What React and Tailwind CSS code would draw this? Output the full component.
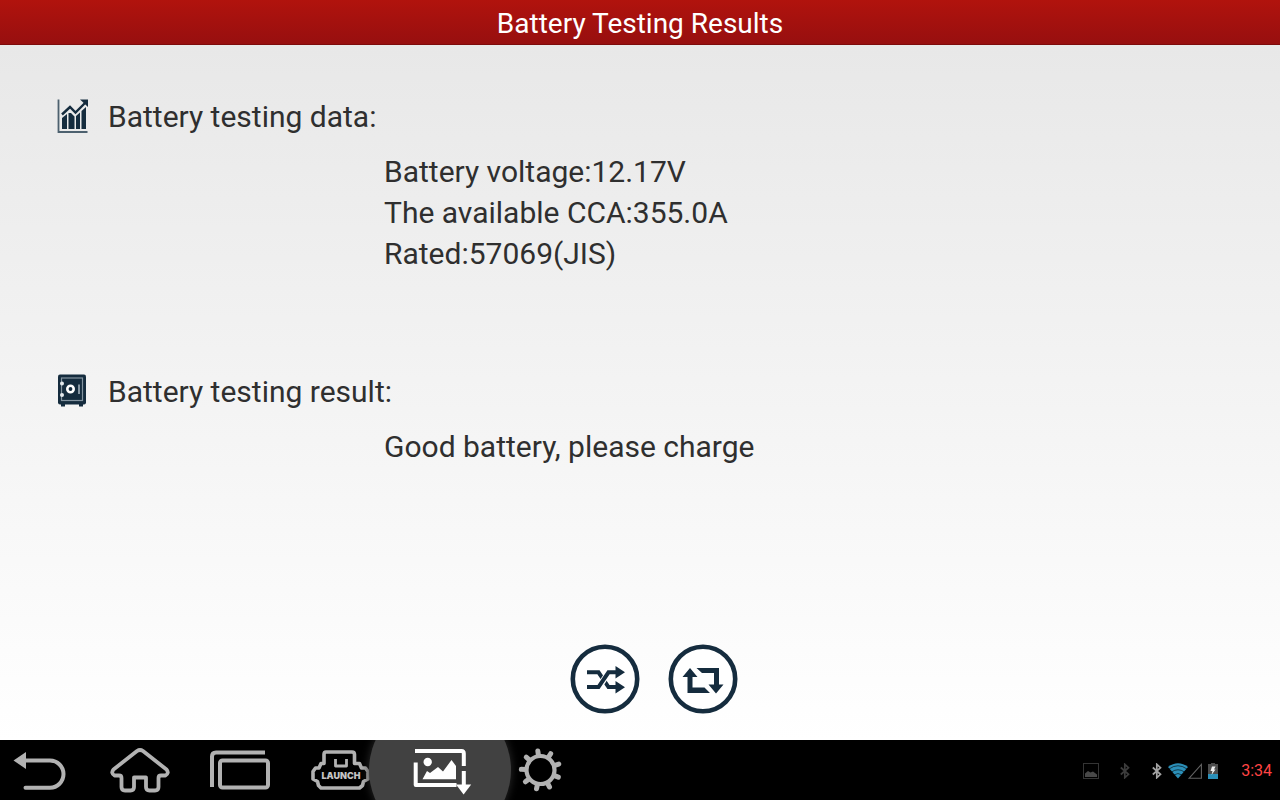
import React from "react";

const NAVY = "#152c3e";
const GRAY = "#b2b2b2";

function ChartIcon() {
  return (
    <svg className="h-9 w-9 shrink-0" viewBox="0.5 1.5 36 36" fill="none" stroke={NAVY} aria-hidden="true">
      <path d="M3 2V34.500H32" strokeWidth="1.800" stroke="#4d616f" />
      <path d="M6.500 17L14.500 9.500L20 15L29.500 5.500" strokeWidth="2.400" />
      <path d="M24.500 2H32.500V9.500Z" fill={NAVY} stroke="none" />
      <path d="M6.500 20.500L11.500 16.500V31.500H6.500ZM13 15.500H15.500L19 19V31.500H13ZM20.500 18.500L24.500 15V31.500H20.500ZM26 13.500L30.500 9.500V31.500H26Z" fill={NAVY} stroke="none" />
    </svg>
  );
}

function SafeIcon() {
  return (
    <svg className="h-9 w-9 shrink-0" viewBox="1 2 36 36" fill="none" aria-hidden="true">
      <path d="M6 30H10V34.500H6ZM24 30H28V34.500H24Z" fill={NAVY} />
      <rect x="3" y="2.500" width="28" height="30" rx="2" fill={NAVY} />
      <rect x="6.500" y="6" width="21" height="22.500" stroke="#8494a0" strokeWidth="1.200" />
      <circle cx="15.500" cy="17" r="3.200" stroke="#fff" strokeWidth="2.600" />
      <circle cx="7" cy="11.500" r="2" fill="#e4e9ec" />
      <circle cx="7" cy="23" r="2" fill="#e4e9ec" />
      <path d="M24 12.500V22" stroke="#8494a0" strokeWidth="2" />
    </svg>
  );
}

function ShuffleIcon() {
  return (
    <svg className="size-[70px]" viewBox="0 0 70 70" fill="none" stroke={NAVY} aria-hidden="true">
      <circle cx="35" cy="35" r="32.200" fill="#fff" strokeWidth="4.600" />
      <path d="M17 28.300H28.500L38.500 43H46" strokeWidth="4" />
      <path d="M29 43L38.500 28.300" stroke="#fff" strokeWidth="6" />
      <path d="M17 43H28.500L38.500 28.300H46" strokeWidth="4" />
      <path d="M45.500 22L55 28.300L45.500 34.500ZM45.500 37L55 43.200L45.500 49.500Z" fill={NAVY} stroke="none" />
    </svg>
  );
}

function RepeatIcon() {
  return (
    <svg className="size-[70px]" viewBox="0 0 70 70" fill="none" stroke={NAVY} aria-hidden="true">
      <circle cx="35" cy="35" r="32.200" fill="#fff" strokeWidth="4.600" />
      <path d="M14.500 33L22 24L29.500 33H24.500V43.500H36.500L42 49H19.500V33Z" fill={NAVY} stroke="none" />
      <path d="M28.500 24H51V40.500H55.500L48 49.500L40.500 40.500H46V29H34Z" fill={NAVY} stroke="none" />
    </svg>
  );
}

function BackIcon() {
  return (
    <svg className="h-[60px] w-20" viewBox="0 0 80 60" fill="none" stroke={GRAY} strokeWidth="4" strokeLinecap="round" aria-hidden="true">
      <path d="M25 20.500H50A13.500 13.600 0 0 1 50 47.700H25.500" />
      <path d="M13.500 20.500L26 12V29Z" fill={GRAY} stroke="none" />
    </svg>
  );
}

function HomeIcon() {
  return (
    <svg className="h-[60px] w-20" viewBox="0 0 80 60" fill="none" stroke={GRAY} strokeWidth="3.800" strokeLinejoin="round" aria-hidden="true">
      <path d="M37 11Q40 9 43 11L66.500 29.500Q69.500 33 65.500 35.500H61Q58.500 35.500 58.500 38V47Q58.500 50.500 55 50.500H49.500Q46 50.500 46 47V37.500H34V47Q34 50.500 30.500 50.500H25Q21.500 50.500 21.500 47V38Q21.500 35.500 19 35.500H14.500Q10.500 33 13.500 29.500Z" />
    </svg>
  );
}

function RecentsIcon() {
  return (
    <svg className="h-[60px] w-20" viewBox="0 0 80 60" fill="none" stroke={GRAY} strokeWidth="4" aria-hidden="true">
      <path d="M65 12.500H16Q12 12.500 12 16.500V47" />
      <rect x="20" y="20.500" width="48" height="27" rx="2.500" />
    </svg>
  );
}

function LaunchIcon() {
  return (
    <svg className="h-[60px] w-20" viewBox="0 0 80 60" fill="none" stroke={GRAY} strokeWidth="3.600" strokeLinejoin="round" aria-hidden="true">
      <path d="M26 12H52Q54.500 12 54.500 14.500V23.500H59.500L61.500 28H65.500L68 31.500V39L63.500 41.500L62.500 45.500L59.500 48H21L18.500 45.500L17.500 41.500L13 39V31.500L15.500 28H19L21 23.500H24V14.500Q24 12 26 12Z" />
      <path d="M35.500 19V26H46.500V19" strokeWidth="2.800" />
      <text x="41" y="39" textAnchor="middle" fill="#c4c4c4" stroke="none" className="font-['Inter',sans-serif] text-[9px] font-black">LAUNCH</text>
    </svg>
  );
}

function ScreenshotIcon() {
  return (
    <svg className="relative h-[60px] w-20" viewBox="0 0 80 60" fill="none" stroke="#fff" strokeWidth="4" aria-hidden="true">
      <path d="M15 11H61.500Q63.800 11 63.800 13.500V26" />
      <path d="M15.700 22.500V45H56.500" strokeLinejoin="round" />
      <path d="M63.800 31V46" />
      <path d="M56 44.500H71.200L63.600 54.500Z" fill="#fff" stroke="none" />
      <circle cx="27.700" cy="22" r="4.200" fill="#fff" stroke="none" />
      <path d="M22.500 39.300L27 31L30 33L38 27L43 31.500L51.500 20L56 26V39.300Z" fill="#fff" stroke="none" />
    </svg>
  );
}

const TEETH = [0, 40, 80, 120, 160, 200, 240, 280, 320];

function SettingsIcon() {
  return (
    <svg className="h-[60px] w-20" viewBox="0 0 80 60" fill="none" stroke={GRAY} aria-hidden="true">
      <circle cx="40.500" cy="30" r="14" strokeWidth="4.200" />
      {TEETH.map((a) => (
        <path key={a} d="M40.500 15V10.800" strokeWidth="5" strokeLinecap="round" transform={`rotate(${a - 8} 40.500 30)`} />
      ))}
    </svg>
  );
}

function PictureIcon() {
  return (
    <svg className="size-4" viewBox="0 0 16 16" fill="none" aria-label="Screenshot saved">
      <rect x="0.500" y="0.500" width="15" height="15" stroke="#343434" />
      <path d="M2 14V10.500L5 8L7.500 9.500L10 8.500L14 11.500V14Z" fill="#484848" />
    </svg>
  );
}

function BluetoothIcon({ color, label }) {
  return (
    <svg className="h-4 w-2.5" viewBox="0 0 10 16" fill="none" stroke={color} strokeWidth="1.700" aria-label={label}>
      <path d="M0.800 4.500L8.500 11.300L4.800 14.700V1.300L8.500 4.700L0.800 11.500" />
    </svg>
  );
}

function WifiIcon() {
  return (
    <svg className="h-4 w-5" viewBox="0 0 20 16" fill="none" aria-label="Wi-Fi">
      <path d="M0 4Q10 -3.500 20 4L10 15.500Z" fill="#2b8fb8" />
      <path d="M1 6Q10 -0.500 19 6M3.500 9Q10 4.500 16.500 9M6 12Q10 9 14 12" stroke="#000" strokeWidth="0.600" />
    </svg>
  );
}

function SignalIcon() {
  return (
    <svg className="h-4 w-3.5" viewBox="0 0 14 16" fill="none" aria-label="No signal">
      <path d="M1 15.300L13.400 1.500V15.300Z" stroke="#626262" strokeWidth="1.100" />
    </svg>
  );
}

function BatteryIcon() {
  return (
    <svg className="h-4 w-2.5" viewBox="0 0 10 16" aria-label="Charging">
      <path d="M3 0H7V1H10V16H0V1H3Z" fill="#4c4c4c" />
      <path d="M0 11H10V16H0Z" fill="#2b8fb8" />
      <path d="M4 3.500H7.500L6 6.500H7.500L3.500 12L4.500 8H2.500Z" fill="#eee" />
    </svg>
  );
}

const READINGS = ["Battery voltage:12.17V", "The available CCA:355.0A", "Rated:57069(JIS)"];

const NAV = [
  { label: "Back", Icon: BackIcon },
  { label: "Home", Icon: HomeIcon },
  { label: "Recent apps", Icon: RecentsIcon },
  { label: "Launch", Icon: LaunchIcon },
  { label: "Take screenshot", Icon: ScreenshotIcon, active: true },
  { label: "Settings", Icon: SettingsIcon },
];

function Section({ icon, title, lines }) {
  return (
    <section>
      <div className="flex items-center gap-4 pl-14">
        {icon}
        <h2>{title}</h2>
      </div>
      <div className="mt-3.5 pl-[30%]">
        {lines.map((line) => (
          <p key={line}>{line}</p>
        ))}
      </div>
    </section>
  );
}

export default function App() {
  return (
    <div className="flex min-h-screen flex-col bg-black font-['Roboto',sans-serif]">
      <header className="flex h-[45px] items-center justify-center border-b border-[#7d0b0b] bg-linear-to-b from-[#b1130d] to-[#970f0f] pt-1">
        <h1 className="text-[28px] leading-8 text-white">Battery Testing Results</h1>
      </header>

      <main className="flex flex-1 flex-col bg-linear-to-b from-[#e8e8e8] to-white pt-[51px] pb-[26px] text-[30px] leading-[41px] text-[#2f2f2f]">
        <div className="flex flex-col gap-[97px]">
          <Section icon={<ChartIcon />} title="Battery testing data:" lines={READINGS} />
          <Section icon={<SafeIcon />} title="Battery testing result:" lines={["Good battery, please charge"]} />
        </div>
        <div className="mt-auto flex justify-center gap-7 pl-7">
          <button type="button" aria-label="Switch test" className="rounded-full">
            <ShuffleIcon />
          </button>
          <button type="button" aria-label="Test again" className="rounded-full">
            <RepeatIcon />
          </button>
        </div>
      </main>

      <footer className="flex h-[60px] items-center justify-between overflow-hidden bg-black pr-2">
        <nav className="flex gap-5">
          {NAV.map(({ label, Icon, active }) => (
            <button key={label} type="button" aria-label={label} className="relative">
              {active && (
                <span className="absolute top-1/2 left-1/2 size-[142px] -translate-x-1/2 -translate-y-1/2 rounded-full bg-[#414141] shadow-[0_0_10px_#2c2c2c]" />
              )}
              <Icon />
            </button>
          ))}
        </nav>
        <div className="flex items-center pt-0.5">
          <div className="flex items-center gap-[21px] pr-[22px]">
            <PictureIcon />
            <BluetoothIcon color="#3c3c3c" label="Bluetooth notification" />
          </div>
          <div className="flex items-center">
            <BluetoothIcon color="#a2a2a2" label="Bluetooth on" />
            <span className="pl-1.5">
              <WifiIcon />
            </span>
            <SignalIcon />
            <span className="pl-1.5">
              <BatteryIcon />
            </span>
          </div>
          <time className="pl-[23px] text-base leading-6 text-[#ff4444]">3:34</time>
        </div>
      </footer>
    </div>
  );
}
